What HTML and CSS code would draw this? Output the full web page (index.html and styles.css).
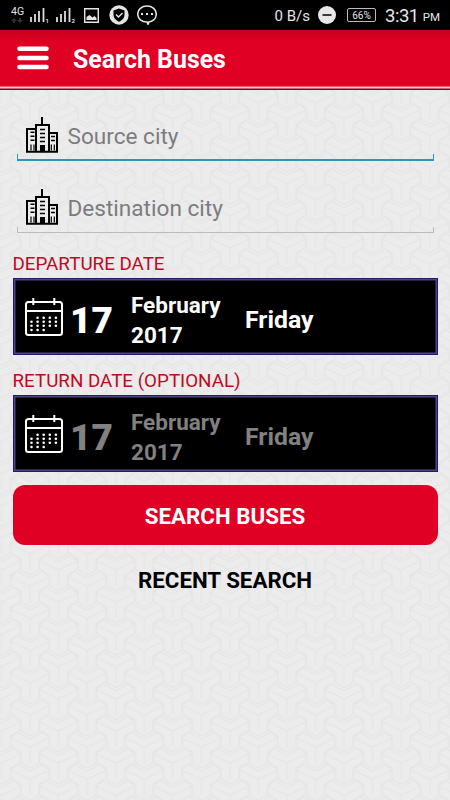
FILE: index.html
```html
<!DOCTYPE html>
<html lang="en">
<head>
<meta charset="utf-8">
<title>Search Buses</title>
<link rel="stylesheet" href="styles.css">
</head>
<body>
<svg class="defs" width="0" height="0" aria-hidden="true">
  <symbol id="city" viewBox="0 0 32 36">
    <path d="M16 0v8M10 35V8h13v27M1 35V12h9M23 16h8v19M0 34.700h32" fill="none" stroke="#000" stroke-width="2"/>
    <path d="M4.500 15.200h4M4.500 19.200h4M4.500 23.200h4M14 12.500h5M14 16.500h5M14 20.500h5M14 24.500h5M25 19.500h4M25 23.500h4" fill="none" stroke="#000" stroke-width="1.500"/>
    <path d="M5 27.500v6M8 27.500v6M25.300 27.500v6M28.300 27.500v6" stroke="#000" stroke-width="1.200"/>
    <path d="M14 28h5v7h-5z"/>
  </symbol>
  <symbol id="calendar" viewBox="0 0 38 38">
    <rect x="1" y="4" width="36" height="33" rx="2.500" fill="none" stroke="#fff" stroke-width="2"/>
    <path d="M1 13h36M8.300 0v7M29.300 0v7" stroke="#fff" stroke-width="2"/>
    <path d="M12.600 19.800h19M6.500 23.800h25M6.500 27.800h25M6.500 32h12.500" fill="none" stroke="#fff" stroke-width="2.600" stroke-linecap="round" stroke-dasharray="0 6.100"/>
  </symbol>
</svg>
<header class="status">
  <div class="network"><b>4G</b><svg width="12" height="5" viewBox="0 0 12 5"><path d="M3 0l3 3H4v2H2V3H0zM9 5L6 2h2V0h2v2h2z" fill="#333"/></svg></div>
  <svg class="signal" width="20" height="16" viewBox="0 0 20 16"><path d="M1 15v-5M5 15V7M9 15V4M13.500 15V1" stroke="#ddd" stroke-width="1.800"/><text x="15.500" y="16" class="sim">1</text></svg>
  <svg class="signal" width="20" height="16" viewBox="0 0 20 16"><path d="M1 15v-5M5 15V7M9 15V4M13.500 15V1" stroke="#ddd" stroke-width="1.800"/><text x="15.500" y="16" class="sim">2</text></svg>
  <svg class="photo" width="15" height="15" viewBox="0 0 15 15"><path d="M.7.700h13.600v13.600H.700z" fill="none" stroke="#e5e5e5" stroke-width="1.400"/><path d="M2.500 12V9l3-2 3 2.500 2-1.500 2 2v2z" fill="#e5e5e5"/></svg>
  <svg class="shield" width="20" height="20" viewBox="0 0 20 20"><circle cx="10" cy="10" r="9.700" fill="#e5e5e5"/><path d="M10 3.500l5.500 2v4c0 3.500-2.500 6-5.500 7.300-3-1.300-5.500-3.800-5.500-7.300v-4z"/><path d="M7 9.500l2.500 2.500 4-4" fill="none" stroke="#e5e5e5" stroke-width="1.400"/></svg>
  <svg class="chat" width="20" height="20" viewBox="0 0 20 20"><path d="M11 17.200c5-.5 8.300-3.600 8.300-8.100 0-4.600-4-8-9.300-8S.700 4.500.700 9.100s4 8 9.300 8l1 2.200 1-2.200" fill="none" stroke="#e5e5e5" stroke-width="1.500"/><path d="M4 8h2v2H4zM9 8h2v2H9zM14 8h2v2h-2z" fill="#e5e5e5"/></svg>
  <span class="rate">0 B/s</span>
  <svg class="dnd" width="18" height="18" viewBox="0 0 18 18"><circle cx="9" cy="9" r="9" fill="#e8e8e8"/><path d="M4.500 9h9" stroke="#000" stroke-width="1.500"/></svg>
  <span class="battery">66%</span>
  <span class="time">3:31</span><span class="pm">PM</span>
</header>
<nav class="bar">
  <svg width="32" height="24" viewBox="0 0 32 24"><path d="M2.500 2.700h27M2.500 12h27M2.500 21h27" stroke="#fff" stroke-width="4.600" stroke-linecap="round"/></svg>
  <h1>Search Buses</h1>
</nav>
<main>
  <svg class="pattern" width="450" height="710" aria-hidden="true">
    <defs>
      <pattern id="tripods" width="57.100" height="32.200" patternUnits="userSpaceOnUse" patternTransform="translate(1.500 -3)">
        <path id="y" class="tripod" d="M28.500 8.100l13-7 6 6v8l-10 6v11l-9 5-9-5v-11l-10-6v-8l6-6zM9.500 7.100l19 9 19-9M28.500 16.100v16"/>
        <use href="#y" y="-32.200"/>
        <use href="#y" x="-28.550" y="-16.100"/>
        <use href="#y" x="-28.550" y="16.100"/>
        <use href="#y" x="28.550" y="-16.100"/>
        <use href="#y" x="28.550" y="16.100"/>
      </pattern>
    </defs>
    <rect width="450" height="710" fill="url(#tripods)"/>
  </svg>
  <form class="content">
    <div class="field active"><svg width="32" height="36"><use href="#city"/></svg><span>Source city</span></div>
    <div class="field"><svg width="32" height="36"><use href="#city"/></svg><span>Destination city</span></div>
    <h2>DEPARTURE DATE</h2>
    <div class="date">
      <svg width="38" height="38"><use href="#calendar"/></svg>
      <strong class="day">17</strong>
      <span class="month">February<br>2017</span>
      <span class="weekday">Friday</span>
    </div>
    <h2>RETURN DATE (OPTIONAL)</h2>
    <div class="date optional">
      <svg width="38" height="38"><use href="#calendar"/></svg>
      <strong class="day">17</strong>
      <span class="month">February<br>2017</span>
      <span class="weekday">Friday</span>
    </div>
    <button type="button">SEARCH BUSES</button>
    <h3>RECENT SEARCH</h3>
  </form>
</main>
</body>
</html>
```
FILE: styles.css
```css
* { box-sizing: border-box; }
body { margin: 0; width: 450px; height: 800px; overflow: hidden; background: #ececed; font-family: Roboto, "Liberation Sans", sans-serif; }
.defs { position: absolute; }
.status { height: 30px; background: #000; color: #e5e5e5; display: flex; align-items: center; padding: 0 10px 0 11px; }
.status > * { flex: none; }
.network { width: 13px; margin-right: 6px; display: flex; flex-direction: column; gap: 1px; }
.network b { font-size: 10.500px; line-height: 10px; font-weight: 400; }
.signal { margin-right: 6px; overflow: visible; }
.sim { font-size: 6px; font-weight: 700; fill: #ddd; }
.photo { margin-left: 2px; }
.shield { margin-left: 10px; }
.chat { margin-left: 8px; }
.rate { font-size: 15px; margin-left: auto; padding-top: 2px; }
.dnd { margin-left: 8px; }
.battery { width: 29px; height: 14px; margin-left: 11px; border: 1px solid #bbb; border-radius: 2px; font-size: 10px; line-height: 13px; text-align: center; }
.time { font-size: 18.500px; margin-left: 9px; padding-top: 1px; letter-spacing: -.5px; }
.pm { font-size: 11.500px; margin-left: 4px; padding-top: 4px; }
.bar { height: 60px; display: flex; align-items: center; gap: 24px; padding: 0 17px 4px; background: linear-gradient(#c6001c, #df0024 12px, #df0024 56px, #ffb5bd 57px, #ffd0d5 58px, #82001a 59px, #82001a); color: #fff; }
.bar h1 { margin: 4px 0 0; font-size: 24.900px; line-height: 30px; font-weight: 700; }
main { position: relative; height: 710px; }
.pattern { position: absolute; left: 0; top: 0; }
.tripod { fill: none; stroke: #e5e5e6; stroke-width: 1.200px; }
.content { position: relative; padding: 25px 12.500px 0; }
.field { --line: #bbb; height: 46px; margin: 0 4px 26px; padding: 2px 9px 0; display: flex; align-items: flex-start; gap: 10px; color: #7c7c7e; font-size: 22.600px; line-height: 40px; border-bottom: 1px solid var(--line); background: linear-gradient(var(--line), var(--line)) left bottom / 1px 5px no-repeat, linear-gradient(var(--line), var(--line)) right bottom / 1px 5px no-repeat; }
.field svg { flex: none; }
.field.active { --line: #2997b7; border-bottom-width: 2px; }
h2 { margin: 0; height: 40px; padding-top: 14px; font-size: 18.800px; line-height: 24px; font-weight: 400; color: #c0081e; }
.field + h2 { margin-top: -26px; height: 45px; padding-top: 19px; }
.date { height: 77px; border: 1px solid #29166d; box-shadow: inset 0 0 0 1.500px #4c438a; background: #000; color: #fff; display: flex; align-items: center; padding-left: 11.500px; font-weight: 700; font-size: 22.500px; }
.date svg { flex: none; }
.day { width: 61px; margin-left: 7px; font-size: 37px; padding-top: 7px; }
.month { width: 114px; line-height: 30px; padding-top: 7px; }
.weekday { padding-top: 6px; font-size: 24.800px; }
.optional > :not(svg) { color: #818181; }
button { display: block; width: 425px; height: 60px; margin: 13px 0 0; padding: 2px 0 0; border: 0; border-radius: 12px; background: #df0024; color: #fff; font: 700 22.300px Roboto, sans-serif; }
h3 { margin: 20px 0 0; font-size: 22.300px; line-height: 30px; font-weight: 700; text-align: center; color: #000; }
```
